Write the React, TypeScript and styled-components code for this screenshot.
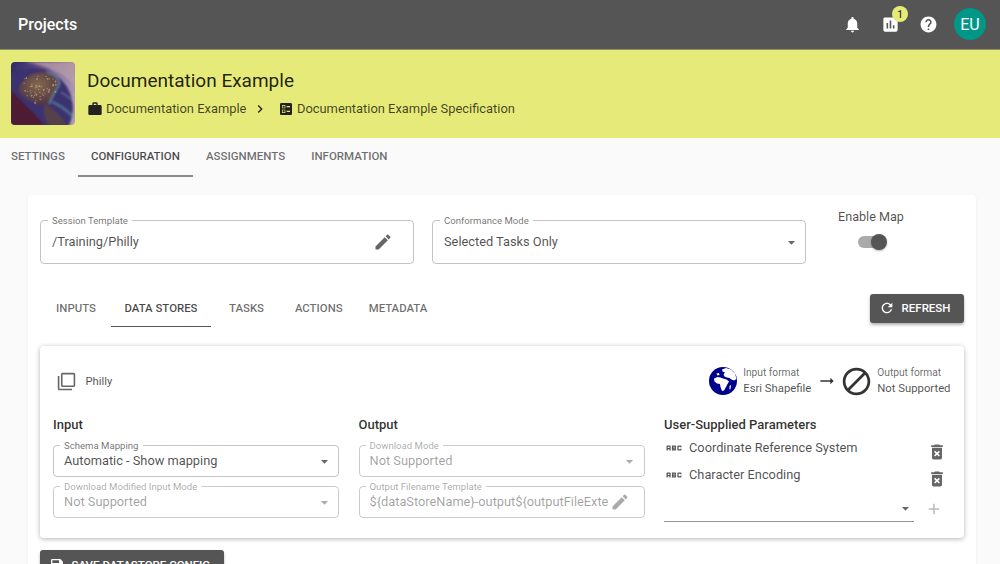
import React from 'react';
import styled, { createGlobalStyle } from 'styled-components';

const icons = {
  bell: 'M12 22c1.1 0 2-.9 2-2h-4c0 1.1.89 2 2 2zm6-6v-5c0-3.07-1.64-5.64-4.5-6.32V4c0-.83-.67-1.5-1.5-1.5s-1.5.67-1.5 1.5v.68C7.63 5.36 6 7.92 6 11v5l-2 2v1h16v-1l-2-2z',
  chart: 'M19 3H5c-1.1 0-2 .9-2 2v14c0 1.1.9 2 2 2h14c1.1 0 2-.9 2-2V5c0-1.1-.9-2-2-2zM9 17H7v-7h2v7zm4 0h-2V7h2v10zm4 0h-2v-4h2v4z',
  help: 'M12 2C6.48 2 2 6.48 2 12s4.48 10 10 10 10-4.48 10-10S17.52 2 12 2zm1 17h-2v-2h2v2zm2.07-7.75l-.9.92C13.45 12.9 13 13.5 13 15h-2v-.5c0-1.1.45-2.1 1.17-2.83l1.24-1.26c.37-.36.59-.86.59-1.41 0-1.1-.9-2-2-2s-2 .9-2 2H8c0-2.21 1.79-4 4-4s4 1.79 4 4c0 .88-.36 1.68-.93 2.25z',
  work: 'M20 6h-4V4c0-1.11-.89-2-2-2h-4c-1.11 0-2 .89-2 2v2H4c-1.11 0-1.99.89-1.99 2L2 19c0 1.11.89 2 2 2h16c1.11 0 2-.89 2-2V8c0-1.11-.89-2-2-2zm-6 0h-4V4h4v2z',
  chevron: 'M10 6L8.59 7.41 13.17 12l-4.58 4.59L10 18l6-6z',
  ballot: 'M13 9.5h5v-2h-5v2zm0 7h5v-2h-5v2zm6 4.5H5c-1.1 0-2-.9-2-2V5c0-1.1.9-2 2-2h14c1.1 0 2 .9 2 2v14c0 1.1-.9 2-2 2zM6 11h5V6H6v5zm1-4h3v3H7V7zM6 18h5v-5H6v5zm1-4h3v3H7v-3z',
  edit: 'M3 17.25V21h3.75L17.81 9.94l-3.75-3.75L3 17.25zM20.71 7.04c.39-.39.39-1.02 0-1.41l-2.34-2.34c-.39-.39-1.02-.39-1.41 0l-1.83 1.83 3.75 3.75 1.83-1.83z',
  refresh: 'M17.65 6.35C16.2 4.9 14.21 4 12 4c-4.42 0-7.99 3.58-7.99 8s3.57 8 7.99 8c3.73 0 6.84-2.55 7.73-6h-2.08c-.82 2.33-3.04 4-5.65 4-3.31 0-6-2.69-6-6s2.69-6 6-6c1.66 0 3.14.69 4.22 1.78L13 11h7V4l-2.35 2.35z',
  copy: 'M3 5H1v16c0 1.1.9 2 2 2h16v-2H3V5zm18-4H7c-1.1 0-2 .9-2 2v14c0 1.1.9 2 2 2h14c1.1 0 2-.9 2-2V3c0-1.1-.9-2-2-2zm0 16H7V3h14v14z',
  trash: 'M6 19c0 1.1.9 2 2 2h8c1.1 0 2-.9 2-2V7H6v12zm2.46-7.12l1.41-1.41L12 12.59l2.12-2.12 1.41 1.41L13.41 14l2.12 2.12-1.41 1.41L12 15.41l-2.12 2.12-1.41-1.41L10.59 14l-2.13-2.12zM15.5 4l-1-1h-5l-1 1H5v2h14V4z',
  save: 'M17 3H5c-1.11 0-2 .9-2 2v14c0 1.1.89 2 2 2h14c1.1 0 2-.9 2-2V7l-4-4zm-5 16c-1.66 0-3-1.34-3-3s1.34-3 3-3 3 1.34 3 3-1.34 3-3 3zm3-10H5V5h10v4z',
  add: 'M19 13h-6v6h-2v-6H5v-2h6V5h2v6h6v2z',
  abc: 'M21 11h-1.5v-.5h-2v3h2V13H21v1c0 .55-.45 1-1 1h-3c-.55 0-1-.45-1-1v-4c0-.55.45-1 1-1h3c.55 0 1 .45 1 1v1zM8 10v5H6.5v-1.5h-2V15H3v-5c0-.55.45-1 1-1h3c.55 0 1 .45 1 1zm-1.5.5h-2V12h2v-1.5zm7 1.5c.55 0 1 .45 1 1v1c0 .55-.45 1-1 1h-4V9h4c.55 0 1 .45 1 1v1c0 .55-.45 1-1 1zM11 10.5v.75h2v-.75h-2zm2 2.25h-2v.75h2v-.75z',
  caret: 'M7 10l5 5 5-5z',
  arrow: 'M16.01 11H4v2h12.01v3L20 12l-3.99-4z',
  block: 'M12 2C6.48 2 2 6.48 2 12s4.48 10 10 10 10-4.48 10-10S17.52 2 12 2zM4 12c0-4.42 3.58-8 8-8 1.85 0 3.55.63 4.9 1.69L5.69 16.9C4.63 15.55 4 13.85 4 12zm8 8c-1.85 0-3.55-.63-4.9-1.69L18.31 7.1C19.37 8.45 20 10.15 20 12c0 4.42-3.58 8-8 8z',
};

const Icon = ({ name, size = 24, color = 'currentColor' }: { name: keyof typeof icons; size?: number; color?: string }) => (
  <svg width={size} height={size} viewBox="0 0 24 24" fill={color} style={{ flex: 'none', display: 'block' }}>
    <path d={icons[name]} />
  </svg>
);

const Global = createGlobalStyle`
  html, body { margin: 0; height: 564px; overflow: hidden; background: #fafafa; }
  body { font-family: Roboto, "Open Sans", sans-serif; color: rgba(0, 0, 0, 0.87); }
  * { box-sizing: border-box; }
`;

const TopBar = styled.header`
  height: 50px;
  background: #555555;
  color: #fff;
  display: flex;
  align-items: center;
  padding: 0 14px 1px 18px;
  border-bottom: 1px solid #8d8f6b;
`;

const AppTitle = styled.div`
  font-size: 16px;
  font-weight: 500;
  flex: 1;
`;

const BarIcon = styled.div`
  width: 38px;
  height: 38px;
  display: flex;
  align-items: center;
  justify-content: center;
  position: relative;
`;

const Badge = styled.span`
  position: absolute;
  top: 1px;
  right: 1px;
  width: 16px;
  height: 16px;
  border-radius: 50%;
  background: #e6ea78;
  color: #333;
  font-size: 10px;
  font-weight: 500;
  display: flex;
  align-items: center;
  justify-content: center;
`;

const Avatar = styled.div`
  width: 32px;
  height: 32px;
  margin-left: 7px;
  border-radius: 50%;
  background: #009688;
  color: #fff;
  font-size: 16px;
  display: flex;
  align-items: center;
  justify-content: center;
`;

const Banner = styled.section`
  height: 88px;
  background: #e6ea78;
  display: flex;
  align-items: center;
  padding: 0 11px 1px;
  gap: 12px;
`;

const Thumb = styled.svg`
  width: 64px;
  height: 63px;
  border-radius: 4px;
  flex: none;
`;

const BannerText = styled.div`
  display: flex;
  flex-direction: column;
  gap: 5px;
`;

const BannerTitle = styled.div`
  font-size: 19px;
  line-height: 26px;
`;

const Crumbs = styled.div`
  display: flex;
  align-items: center;
  font-size: 12.9px;
  line-height: 20px;
  color: rgba(0, 0, 0, 0.72);
`;

const CrumbIcon = styled.span`
  margin-right: 3px;
  color: #222;
`;

const CrumbSep = styled.span`
  margin: 0 9.5px 0 6px;
  color: #222;
`;

const MainTabs = styled.nav`
  height: 39px;
  display: flex;
  margin-left: -2px;
`;

const MainTab = styled.div<{ $active?: boolean }>`
  padding: 0 13px;
  height: 39px;
  line-height: 37px;
  font-size: 11.5px;
  font-weight: 500;
  color: ${(p) => (p.$active ? 'rgba(0,0,0,0.72)' : 'rgba(0,0,0,0.58)')};
  border-bottom: 2px solid ${(p) => (p.$active ? '#8a8a8a' : 'transparent')};
`;

const Paper = styled.main`
  margin: 18px 24px 0 28px;
  padding: 20px 12.5px 0 12px;
  background: #fff;
  border-radius: 4px;
  box-shadow: 0 1px 3px rgba(0, 0, 0, 0.06);
`;

const TopFields = styled.div`
  display: grid;
  grid-template-columns: 374px 374px 1fr;
  column-gap: 18px;
`;

const Field = styled.fieldset<{ $disabled?: boolean; $small?: boolean; $end?: number }>`
  margin: 0;
  min-width: 0;
  height: ${(p) => (p.$small ? 37 : 49)}px;
  padding: 0 ${(p) => p.$end ?? 5.5}px ${(p) => (p.$small ? 6 : 5)}px ${(p) => (p.$small ? 10 : 11)}px;
  border: 1px solid ${(p) => (p.$disabled ? 'rgba(0,0,0,0.2)' : 'rgba(0,0,0,0.23)')};
  border-radius: 4px;
  display: flex;
  align-items: center;
`;

const Legend = styled.legend<{ $disabled?: boolean }>`
  margin-left: -4px;
  padding: 0 4px;
  font-size: 9.6px;
  line-height: 11px;
  color: ${(p) => (p.$disabled ? 'rgba(0,0,0,0.36)' : 'rgba(0,0,0,0.58)')};
`;

const FieldValue = styled.div<{ $disabled?: boolean }>`
  flex: 1;
  min-width: 0;
  margin-right: 2px;
  font-size: 12.8px;
  line-height: 20px;
  white-space: nowrap;
  overflow: hidden;
  color: ${(p) => (p.$disabled ? 'rgba(0,0,0,0.38)' : 'rgba(0,0,0,0.7)')};
`;

const MapToggle = styled.div`
  display: flex;
  flex-direction: column;
  align-items: center;
  gap: 12px;
  margin-top: -6px;
  width: 94px;
  font-size: 12.6px;
  line-height: 15px;
  color: rgba(0, 0, 0, 0.7);
`;

const Track = styled.div`
  width: 26px;
  height: 12px;
  border-radius: 6px;
  background: #aaaaaa;
  position: relative;
`;

const Knob = styled.span`
  position: absolute;
  top: -2px;
  right: -3px;
  width: 16px;
  height: 16px;
  border-radius: 50%;
  background: #555;
  box-shadow: 0 1px 2px rgba(0, 0, 0, 0.3);
`;

const SubRow = styled.div`
  margin-top: 25px;
  height: 38px;
  display: flex;
  align-items: center;
  justify-content: space-between;
`;

const SubTabs = styled.div`
  display: flex;
  height: 38px;
  margin-left: 1px;
`;

const SubTab = styled.div<{ $active?: boolean; $width: number }>`
  width: ${(p) => p.$width}px;
  text-align: center;
  line-height: 38px;
  height: 38px;
  font-size: 11.4px;
  font-weight: 500;
  color: ${(p) => (p.$active ? 'rgba(0,0,0,0.72)' : 'rgba(0,0,0,0.58)')};
  border-bottom: 1px solid ${(p) => (p.$active ? '#555' : 'transparent')};
`;

const DarkButton = styled.button`
  height: 29px;
  border: 0;
  border-radius: 3px;
  background: #555;
  color: #fff;
  display: flex;
  align-items: center;
  gap: 6.5px;
  padding: 0 13px 0 9px;
  font: 500 11.5px Roboto, sans-serif;
  box-shadow: 0 2px 3px rgba(0, 0, 0, 0.3);
`;

const StoreCard = styled.section`
  margin-top: 19px;
  height: 192px;
  padding: 0 13px;
  border-radius: 4px;
  background: #fff;
  box-shadow: 0 1px 5px rgba(0, 0, 0, 0.3);
`;

const StoreHead = styled.div`
  height: 70px;
  display: flex;
  align-items: center;
  padding-left: 3.5px;
`;

const StoreName = styled.div`
  margin-left: 10px;
  flex: 1;
  font-size: 11.2px;
  color: rgba(0, 0, 0, 0.7);
`;

const FormatBlock = styled.div<{ $offset: number }>`
  display: flex;
  flex-direction: column;
  gap: 2px;
  margin-left: ${(p) => p.$offset}px;
  font-size: 11.3px;
  line-height: 14px;
  color: rgba(0, 0, 0, 0.7);
`;

const FormatLabel = styled.div`
  font-size: 10.2px;
  color: rgba(0, 0, 0, 0.6);
`;

const ArrowBox = styled.span`
  margin: 0 3px 0 6px;
  color: #333;
`;

const Columns = styled.div`
  display: grid;
  grid-template-columns: 286px 286px 1fr;
  column-gap: 19.5px;
`;

const Column = styled.div`
  display: flex;
  flex-direction: column;
`;

const ColumnTitle = styled.div`
  font-size: 13px;
  font-weight: 500;
  line-height: 18px;
  margin-bottom: 6px;
  color: rgba(0, 0, 0, 0.82);
`;

const FieldStack = styled.div`
  display: flex;
  flex-direction: column;
  gap: 4px;
`;

const ParamList = styled.div`
  margin-top: -6px;
  display: flex;
  flex-direction: column;
`;

const ParamRow = styled.div`
  height: 27px;
  display: flex;
  align-items: center;
  font-size: 12.8px;
  color: rgba(0, 0, 0, 0.7);
`;

const ParamName = styled.span`
  flex: 1;
  margin-left: 5px;
`;

const TrashSlot = styled.span`
  margin: 8px 4px 0 0;
`;

const AddRow = styled.div`
  margin-top: 8px;
  display: flex;
  align-items: center;
  gap: 10.5px;
`;

const AddSelect = styled.div`
  width: 250px;
  height: 26px;
  border-bottom: 1px solid rgba(0, 0, 0, 0.42);
  display: flex;
  align-items: center;
  justify-content: flex-end;
`;

const SaveButton = styled(DarkButton)`
  margin-top: 12px;
  height: 30px;
  padding-right: 14px;
`;

// city lights, jittered so they don't read as a grid
const lights = Array.from({ length: 60 }, (_, i) => {
  const a = Math.sin(i * 12.9898) * 43758.5453;
  const b = Math.sin(i * 78.233) * 12543.123;
  return { x: 9 + (a - Math.floor(a)) * 36, y: 14 + (b - Math.floor(b)) * 28 };
}).filter((d) => d.x + d.y > 30 && d.x + d.y < 80 && d.y - d.x < 18);

const Thumbnail = () => (
  <Thumb viewBox="0 0 64 63" preserveAspectRatio="none">
    <defs>
      <linearGradient id="sky" x1="0" y1="0" x2="1" y2="0.5">
        <stop offset="0" stopColor="#2a2a66" />
        <stop offset="0.5" stopColor="#6d4f88" />
        <stop offset="1" stopColor="#b39ab4" />
      </linearGradient>
      <radialGradient id="land" cx="0.5" cy="0.4" r="0.7">
        <stop offset="0" stopColor="#85694e" />
        <stop offset="0.65" stopColor="#5a4046" />
        <stop offset="1" stopColor="#3d2a48" />
      </radialGradient>
      <filter id="soft" x="-10%" y="-10%" width="120%" height="120%">
        <feGaussianBlur stdDeviation="1.3" />
      </filter>
    </defs>
    <rect width="64" height="63" fill="url(#sky)" />
    <g filter="url(#soft)">
      <path d="M14 0 L64 0 L64 24 Q46 5 14 0Z" fill="#bfa4a6" opacity="0.7" />
      <circle cx="22" cy="46" r="40" fill="#3a3270" />
      <path d="M0 63 L0 28 Q16 44 34 63Z" fill="#4d1c30" />
      <path d="M7 28 Q14 9 36 10 Q49 14 48 23 Q42 32 38 42 Q28 46 22 40 Q11 36 7 28Z" fill="url(#land)" />
      <path d="M36 10 Q49 14 48 23 Q42 32 38 42" fill="none" stroke="#6aa0ad" strokeWidth="2.2" opacity="0.6" />
      <path d="M34 42 Q46 48 56 63 L38 63 Q30 52 34 42Z" fill="#56404a" />
      <path d="M41 40 Q50 43 64 56" fill="none" stroke="#6fa8b5" strokeWidth="2" opacity="0.55" />
      <path d="M46 3 L64 17 M34 2 L64 27 M50 30 L64 40" stroke="#98a0d0" strokeWidth="1.2" opacity="0.5" />
    </g>
    <g fill="#d8b98a" opacity="0.6">
      {lights.map((d, i) => (
        <circle key={i} cx={d.x} cy={d.y} r={i % 3 === 0 ? 0.9 : 0.6} />
      ))}
    </g>
  </Thumb>
);

const Globe = () => (
  <svg width="28" height="28" viewBox="0 0 28 28" style={{ flex: 'none' }}>
    <circle cx="14" cy="14" r="14" fill="#00008b" />
    <g fill="#fff">
      <path d="M5 11.5 L8.5 10 L11.5 10.5 L14 11.5 L17.5 12.5 L20 14.5 L18.5 17 L17 20 L15 23.5 L13 24 L11.5 20 L11 17 L8 16.5 L5.5 14.5Z" />
      <path d="M13 2.5 L17 1 L22 2.5 L26 6.5 L27.5 12 L25 13.5 L22.5 12.5 L20.5 11 L18 10.5 L15.5 9.5 L14.5 7.5 L16 5.5 L13.5 4.5Z" />
      <path d="M7.5 6.5 L10 6 L10.5 8 L8.5 8.5Z" />
      <path d="M20.5 19 L22 18 L21.5 22 L20.5 22.5Z" />
    </g>
  </svg>
);

export default function App() {
  return (
    <>
      <Global />
      <TopBar>
        <AppTitle>Projects</AppTitle>
        <BarIcon><Icon name="bell" size={19} /></BarIcon>
        <BarIcon><Icon name="chart" size={19} /><Badge>1</Badge></BarIcon>
        <BarIcon><Icon name="help" size={19} /></BarIcon>
        <Avatar>EU</Avatar>
      </TopBar>
      <Banner>
        <Thumbnail />
        <BannerText>
          <BannerTitle>Documentation Example</BannerTitle>
          <Crumbs>
            <CrumbIcon><Icon name="work" size={16} /></CrumbIcon>
            Documentation Example
            <CrumbSep><Icon name="chevron" size={16} /></CrumbSep>
            <CrumbIcon><Icon name="ballot" size={16} /></CrumbIcon>
            Documentation Example Specification
          </Crumbs>
        </BannerText>
      </Banner>
      <MainTabs>
        <MainTab>SETTINGS</MainTab>
        <MainTab $active>CONFIGURATION</MainTab>
        <MainTab>ASSIGNMENTS</MainTab>
        <MainTab>INFORMATION</MainTab>
      </MainTabs>
      <Paper>
        <TopFields>
          <Field $end={20}>
            <Legend>Session Template</Legend>
            <FieldValue>/Training/Philly</FieldValue>
            <Icon name="edit" size={20} color="#666" />
          </Field>
          <Field>
            <Legend>Conformance Mode</Legend>
            <FieldValue>Selected Tasks Only</FieldValue>
            <Icon name="caret" size={17} color="#666" />
          </Field>
          <MapToggle>
            Enable Map
            <Track><Knob /></Track>
          </MapToggle>
        </TopFields>
        <SubRow>
          <SubTabs>
            <SubTab $width={70}>INPUTS</SubTab>
            <SubTab $width={100} $active>DATA STORES</SubTab>
            <SubTab $width={71}>TASKS</SubTab>
            <SubTab $width={73.5}>ACTIONS</SubTab>
            <SubTab $width={85}>METADATA</SubTab>
          </SubTabs>
          <DarkButton><Icon name="refresh" size={16} />REFRESH</DarkButton>
        </SubRow>
        <StoreCard>
          <StoreHead>
            <Icon name="copy" size={19} color="#666" />
            <StoreName>Philly</StoreName>
            <Globe />
            <FormatBlock $offset={6.5}>
              <FormatLabel>Input format</FormatLabel>
              Esri Shapefile
            </FormatBlock>
            <ArrowBox><Icon name="arrow" size={20} /></ArrowBox>
            <Icon name="block" size={33} color="#333" />
            <FormatBlock $offset={4}>
              <FormatLabel>Output format</FormatLabel>
              Not Supported
            </FormatBlock>
          </StoreHead>
          <Columns>
            <Column>
              <ColumnTitle>Input</ColumnTitle>
              <FieldStack>
                <Field $small>
                  <Legend>Schema Mapping</Legend>
                  <FieldValue>Automatic - Show mapping</FieldValue>
                  <Icon name="caret" size={17} color="#666" />
                </Field>
                <Field $small $disabled>
                  <Legend $disabled>Download Modified Input Mode</Legend>
                  <FieldValue $disabled>Not Supported</FieldValue>
                  <Icon name="caret" size={17} color="#aaa" />
                </Field>
              </FieldStack>
            </Column>
            <Column>
              <ColumnTitle>Output</ColumnTitle>
              <FieldStack>
                <Field $small $disabled>
                  <Legend $disabled>Download Mode</Legend>
                  <FieldValue $disabled>Not Supported</FieldValue>
                  <Icon name="caret" size={17} color="#aaa" />
                </Field>
                <Field $small $disabled $end={14}>
                  <Legend $disabled>Output Filename Template</Legend>
                  <FieldValue $disabled>{'${dataStoreName}-output${outputFileExtension}'}</FieldValue>
                  <Icon name="edit" size={20} color="#aaa" />
                </Field>
              </FieldStack>
            </Column>
            <Column>
              <ColumnTitle>User-Supplied Parameters</ColumnTitle>
              <ParamList>
                <ParamRow>
                  <Icon name="abc" size={20} color="#555" />
                  <ParamName>Coordinate Reference System</ParamName>
                  <TrashSlot><Icon name="trash" size={20} color="#666" /></TrashSlot>
                </ParamRow>
                <ParamRow>
                  <Icon name="abc" size={20} color="#555" />
                  <ParamName>Character Encoding</ParamName>
                  <TrashSlot><Icon name="trash" size={20} color="#666" /></TrashSlot>
                </ParamRow>
              </ParamList>
              <AddRow>
                <AddSelect><Icon name="caret" size={17} color="#666" /></AddSelect>
                <Icon name="add" size={18} color="#bbb" />
              </AddRow>
            </Column>
          </Columns>
        </StoreCard>
        <SaveButton><Icon name="save" size={16} />SAVE DATASTORE CONFIG</SaveButton>
      </Paper>
    </>
  );
}
